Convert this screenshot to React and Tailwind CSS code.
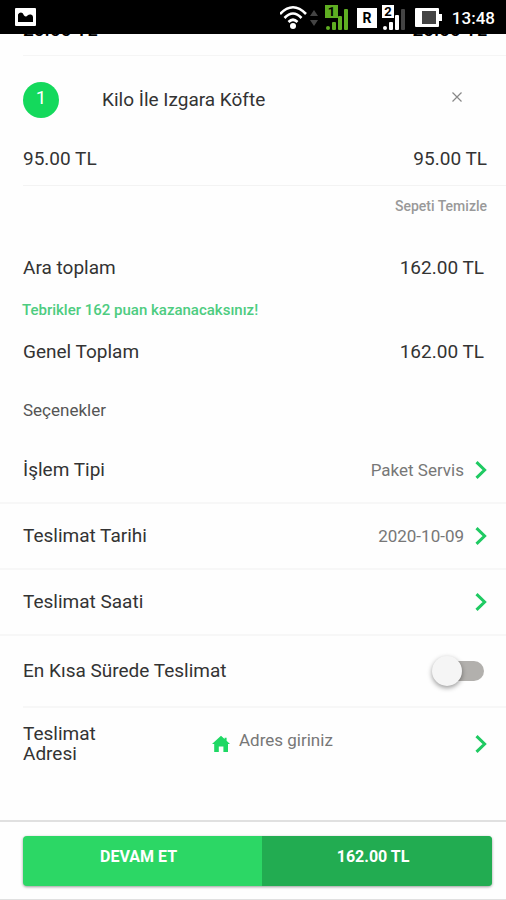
import React, { useState } from 'react';

const Chevron = () => (
    <svg className="w-3 h-[18px] shrink-0" viewBox="0 0 12 18" fill="none" stroke="#1fca62" strokeWidth="3" aria-hidden="true">
        <path d="M1.5 1.2 9.6 9 1.5 16.8" />
    </svg>
);

const HomeIcon = () => (
    <svg className="w-[18px] h-[18px] shrink-0" viewBox="0 0 18 18" fill="#1fd864" aria-hidden="true">
        <path d="M9 .8 12.6 4V2.8h2v3L18 9h-2v7.9h-4.6v-5.5H6.8v5.5H2.2V9H0z" />
    </svg>
);

const StatusBar = () => (
    <header className="relative z-10 flex items-center justify-between h-[34px] shrink-0 bg-black pl-[15px] pr-[11px]">
        <svg className="w-[21px] h-[18px]" viewBox="0 0 21 18" aria-hidden="true">
            <rect width="21" height="18" rx="1" fill="#fff" />
            <path d="M3 14V6.5Q4 4.5 6 4.5T9 7.500Q11 9.500 12.500 7.500 14 6 16 6.500T18 9v5z" fill="#000" />
        </svg>
        <div className="flex items-center pt-[2px]">
            <svg className="w-[162px] h-[28px]" viewBox="0 0 162 28" fontFamily="Roboto, sans-serif" fontWeight="700" textAnchor="middle" aria-hidden="true">
                {/* wifi */}
                <g fill="none" stroke="#fff" strokeWidth="2.600">
                    <path d="M0 10Q13-3.500 26 10" />
                    <path d="M4.500 14Q13 5 21.500 14" />
                    <path d="M8.500 18Q13 13.500 17.500 18" />
                </g>
                <circle cx="13" cy="22" r="3" fill="#fff" />
                <path d="M30 12h8l-4-6zM30 16h8l-4 6z" fill="#444" />
                {/* first sim */}
                <rect x="45" y="1" width="13" height="13" fill="#5fae22" />
                <text x="51.500" y="12" fontSize="13" fill="#000">1</text>
                <g fill="#5fae22">
                    <circle cx="48" cy="24" r="2" />
                    <rect x="52" y="18" width="4" height="8" rx="1" />
                    <rect x="58" y="12" width="4" height="14" rx="1" />
                    <rect x="64" y="5" width="4" height="21" rx="1" />
                </g>
                {/* roaming */}
                <rect x="77" y="4" width="20" height="20" fill="#fff" />
                <text x="87" y="19" fontSize="14" fill="#000">R</text>
                {/* second sim */}
                <rect x="102" y="1" width="12" height="13" fill="#fff" />
                <text x="108" y="12" fontSize="13" fill="#000">2</text>
                <g fill="#fff">
                    <circle cx="105" cy="24" r="2" />
                    <rect x="109" y="18" width="4" height="8" rx="1" />
                    <rect x="115" y="11" width="4" height="15" rx="1" />
                    <rect x="121" y="5" width="4" height="21" rx="1" fill="#444" />
                </g>
                {/* battery */}
                <rect x="135" y="4" width="24" height="19" rx="1" fill="#fff" />
                <rect x="159" y="10" width="3" height="7" fill="#fff" />
                <rect x="142" y="7" width="14" height="13" fill="#444" />
            </svg>
            <span className="ml-[10px] text-[17px] leading-6 font-medium text-white">13:48</span>
        </div>
    </header>
);

const PriceRow = ({ left, right }) => (
    <div className="flex justify-between pl-[23px] pr-[19px] text-[19px] leading-6">
        <span>{left}</span>
        <span>{right}</span>
    </div>
);

const TotalRow = ({ label, value }) => (
    <div className="flex justify-between mt-5 pl-[23px] pr-[22px] text-[19px] leading-6">
        <span>{label}</span>
        <span>{value}</span>
    </div>
);

const OptionRow = ({ label, value }) => (
    <button type="button" className="flex items-center justify-between w-full h-[66px] pl-[23px] pr-[19px] border-b-2 border-[#f7f7f7] text-left">
        <span className="text-[19px] leading-6">{label}</span>
        <span className="flex items-center gap-[11px] text-[17px] leading-6 text-[#777]">
            {value}
            <Chevron />
        </span>
    </button>
);

const App = () => {
    const [fast, setFast] = useState(false);

    return (
        <div className="flex flex-col min-h-screen overflow-hidden bg-[#fefefe] font-['Roboto',sans-serif] text-[#333]">
            <StatusBar />

            <main className="flex-1">
                {/* Previous item, scrolled under the status bar */}
                <div className="-mt-4 pb-[13px] font-medium text-black">
                    <PriceRow left="20.00 TL" right="20.00 TL" />
                </div>

                <section className="ml-[23px] border-t border-[#f5f5f5]">
                    <div className="flex items-center pt-[26px] pr-[43px]">
                        <span className="flex justify-center w-9 h-9 pt-1 shrink-0 rounded-full bg-[#14d95c] text-[19px] leading-6 text-white">1</span>
                        <h2 className="flex-1 ml-[43px] text-[19px] leading-6">Kilo İle Izgara Köfte</h2>
                        <button type="button" aria-label="Sil" className="mb-[7px]">
                            <svg className="w-3 h-3" viewBox="0 0 12 12" stroke="#888" strokeWidth="1.2" aria-hidden="true">
                                <path d="M1.500 1.500l9 9M10.500 1.500l-9 9" />
                            </svg>
                        </button>
                    </div>
                </section>
                <div className="pt-[29px] pb-[14px]">
                    <PriceRow left="95.00 TL" right="95.00 TL" />
                </div>

                <div className="flex justify-end ml-[23px] pt-[10px] pr-[19px] border-t border-[#f3f3f3]">
                    <button type="button" className="text-[14px] leading-5 font-medium text-[#999]">Sepeti Temizle</button>
                </div>

                <div className="pt-5">
                    <TotalRow label="Ara toplam" value="162.00 TL" />
                    <p className="mt-5 pl-[22px] text-[15px] leading-5 font-medium text-[#4dcc80]">Tebrikler 162 puan kazanacaksınız!</p>
                    <TotalRow label="Genel Toplam" value="162.00 TL" />
                </div>

                <h3 className="mt-9 mb-[18px] pl-[23px] text-[17px] leading-5 text-[#555]">Seçenekler</h3>

                <OptionRow label="İşlem Tipi" value="Paket Servis" />
                <OptionRow label="Teslimat Tarihi" value="2020-10-09" />
                <OptionRow label="Teslimat Saati" />

                <div className="flex items-center justify-between h-[72px] ml-[23px] pr-[22px] border-b-2 border-[#f7f7f7]">
                    <label htmlFor="fast" className="text-[19px] leading-6">En Kısa Sürede Teslimat</label>
                    <input
                        id="fast"
                        type="checkbox"
                        role="switch"
                        checked={fast}
                        onChange={(e) => setFast(e.target.checked)}
                        className="relative w-11 h-5 appearance-none rounded-full bg-[#b2b0ad] checked:bg-[#8fe5b0] before:absolute before:-top-[5px] before:-left-2 before:size-[30px] before:rounded-full before:bg-[#f5f5f5] before:shadow-[0_2px_5px_rgba(0,0,0,0.4)] checked:before:left-6"
                    />
                </div>

                <button type="button" className="flex items-center w-full py-4 pl-[23px] pr-[19px] text-left">
                    <span className="w-[189px] text-[19px] leading-5">Teslimat<br />Adresi</span>
                    <HomeIcon />
                    <span className="flex-1 pb-2 ml-[9px] text-[17px] leading-5 text-[#777]">Adres giriniz</span>
                    <Chevron />
                </button>
            </main>

            <footer className="pt-[14px] pr-[14px] pb-[13px] pl-[23px] border-t-2 border-b border-[#e0e0e0]">
                <button type="button" className="flex w-full h-[50px] overflow-hidden rounded bg-[#2cd765] text-[16px] leading-5 font-bold text-white shadow-[0_1px_3px_rgba(0,0,0,0.4)]">
                    <span className="flex items-center justify-center w-[51%] h-full pb-2 pr-2">DEVAM ET</span>
                    <span className="flex items-center justify-center flex-1 h-full pb-2 pr-2 bg-[#22ac51]">162.00 TL</span>
                </button>
            </footer>
        </div>
    );
};

export default App;
